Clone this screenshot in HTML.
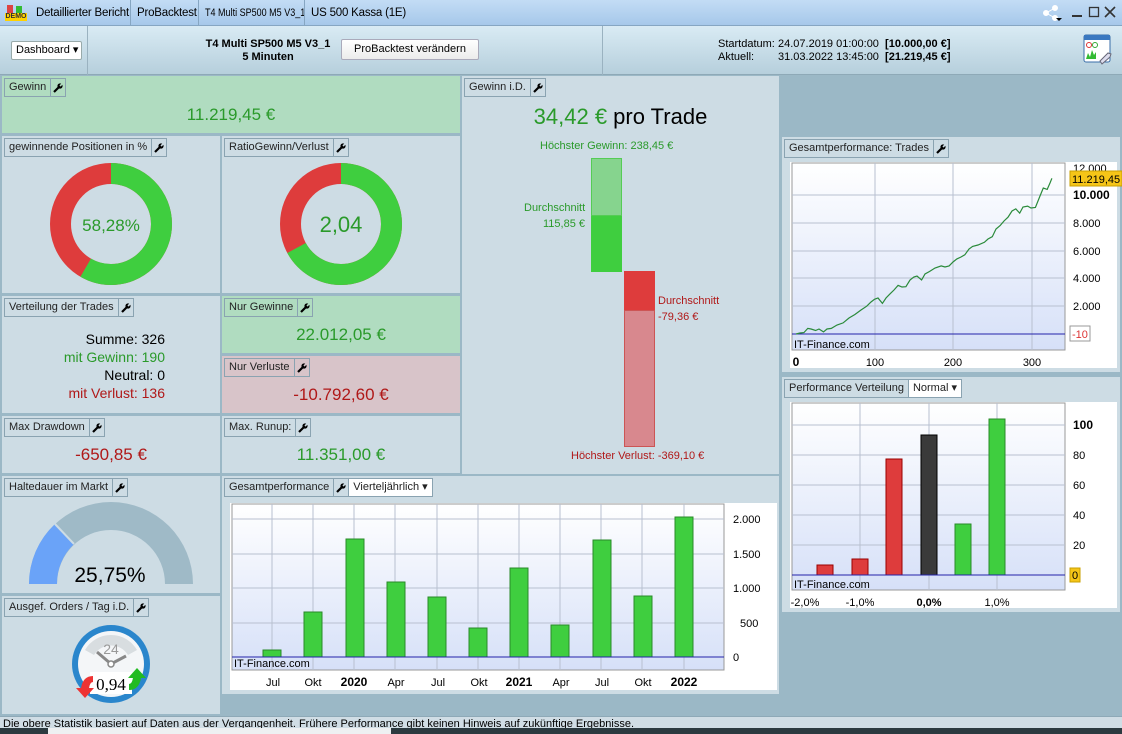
<!DOCTYPE html>
<html><head><meta charset="utf-8"><style>
*{margin:0;padding:0;box-sizing:border-box}
body{width:1122px;height:734px;overflow:hidden;position:relative;background:#9bb8c6;font-family:"Liberation Sans",Arial,sans-serif;font-size:11px;color:#000}
.a{position:absolute}
.p{position:absolute;background:#cddce4}
.t{position:absolute;left:2px;top:2px;height:19px;border:1px solid #8aa3b1;display:flex;font-size:11px;line-height:17px;color:#222}
.t span{padding:0 4px}
.t .w{border-left:1px solid #8aa3b1;width:15px;padding:0;display:flex;align-items:center;justify-content:center}
.v{position:absolute;left:0;right:0;text-align:center;font-size:17px}
.g{color:#2a9a2a}.r{color:#b01818}
.tb{position:absolute;top:7px;font-size:11.5px;letter-spacing:-0.2px;white-space:nowrap}
</style></head><body>
<div class="a" style="left:0;top:0;width:1122px;height:26px;background:linear-gradient(#c3dcf5,#a6c8ea);border-bottom:1px solid #86a6c2"></div>
<div class="a" style="left:5px;top:5px;width:22px;height:16px">
<div class="a" style="left:2px;top:0;width:6px;height:8px;background:#d44"></div><div class="a" style="left:11px;top:1px;width:6px;height:7px;background:#3b3"></div>
<div class="a" style="left:0;top:8px;width:22px;height:8px;background:#ffd200;font-size:7px;font-weight:bold;line-height:8px;color:#333;text-align:center">DEMO</div></div>
<div class="tb" style="left:36px">Detaillierter Bericht</div>
<div class="a" style="left:130px;top:0;width:1px;height:25px;background:#86a6c2"></div>
<div class="tb" style="left:137px">ProBacktest</div>
<div class="a" style="left:198px;top:0;width:1px;height:25px;background:#86a6c2"></div>
<div class="tb" style="left:205px;font-size:11px;letter-spacing:0;transform:scaleX(0.82);transform-origin:0 0">T4 Multi SP500 M5 V3_1</div>
<div class="a" style="left:304px;top:0;width:1px;height:25px;background:#86a6c2"></div>
<div class="tb" style="left:311px">US 500 Kassa (1E)</div>
<svg class="a" style="left:1040px;top:4px" width="82" height="18"><g fill="#fff" stroke="#fff"><circle cx="6" cy="9" r="2.5"/><circle cx="15" cy="4" r="2.5"/><circle cx="15" cy="14" r="2.5"/><line x1="6" y1="9" x2="15" y2="4"/><line x1="6" y1="9" x2="15" y2="14"/></g><path d="M16 14h6l-3 3z" fill="#000"/><rect x="32" y="11" width="10" height="2" fill="#333"/><rect x="49.5" y="3.5" width="9" height="9" fill="none" stroke="#333" stroke-width="1.3"/><path d="M65 3l10 10M75 3l-10 10" stroke="#333" stroke-width="1.6"/></svg>
<div class="a" style="left:0;top:26px;width:1122px;height:49px;background:linear-gradient(#d9ebf4,#b6cfdc);border-bottom:1px solid #8ea9b7"></div>
<div class="a" style="left:87px;top:26px;width:1px;height:49px;background:#9ab2c0"></div>
<div class="a" style="left:602px;top:26px;width:1px;height:49px;background:#9ab2c0"></div>
<div class="a" style="left:11px;top:41px;width:71px;height:19px;background:#fff;border:1px solid #9aa;border-radius:2px;font-size:11px;line-height:17px;padding-left:4px">Dashboard ▾</div>
<div class="a" style="left:198px;top:38px;width:140px;text-align:center;font-weight:bold;font-size:11px;line-height:13px">T4 Multi SP500 M5 V3_1<br>5 Minuten</div>
<div class="a" style="left:341px;top:39px;width:138px;height:21px;background:linear-gradient(#fff,#ececec);border:1px solid #aab;border-radius:2px;text-align:center;line-height:19px;font-size:11px">ProBacktest verändern</div>
<div class="a" style="left:718px;top:38px;font-size:11px;line-height:13px">Startdatum:<br>Aktuell:</div>
<div class="a" style="left:778px;top:38px;font-size:11px;line-height:13px">24.07.2019 01:00:00 &nbsp;<b>[10.000,00 €]</b><br>31.03.2022 13:45:00 &nbsp;<b>[21.219,45 €]</b></div>
<svg class="a" style="left:1083px;top:33px" width="30" height="32"><rect x="1" y="2" width="26" height="27" rx="2" fill="#fff" stroke="#3a6ea8"/><rect x="1" y="2" width="26" height="5" fill="#3a78c0"/><circle cx="6" cy="12" r="2.5" fill="none" stroke="#d33"/><circle cx="12" cy="12" r="2.5" fill="none" stroke="#3a3"/><path d="M3 26l2-6 2 4 2-7 2 5 2-3v7H3z" fill="#3b3"/><path d="M17 28l8-8 3 1-1 3-8 7z" fill="#dde" stroke="#667"/></svg>
<div class="p" style="left:2px;top:76px;width:458px;height:57px;background:#b0dcc0"><div class="t"><span>Gewinn</span><span class="w"><svg width="10" height="10"><path d="M1 9L6 4" stroke="#000" stroke-width="2.2"/><circle cx="7" cy="3" r="2.6" fill="#000"/><path d="M7 3L10 0" stroke="#b0dcc0" stroke-width="1.6"/></svg></span></div><div class="v g" style="top:29px">11.219,45 €</div></div>
<div class="p" style="left:462px;top:76px;width:317px;height:398px"><div class="t"><span>Gewinn i.D.</span><span class="w"><svg width="10" height="10"><path d="M1 9L6 4" stroke="#000" stroke-width="2.2"/><circle cx="7" cy="3" r="2.6" fill="#000"/><path d="M7 3L10 0" stroke="#cddce4" stroke-width="1.6"/></svg></span></div>
<div class="a" style="left:0;right:0;top:28px;text-align:center;font-size:22px"><span class="g">34,42 €</span> pro Trade</div>
<div class="a g" style="left:78px;top:64px;font-size:11px">Höchster Gewinn: 238,45 €</div>
<div class="a" style="left:129px;top:82px;width:31px;height:58px;background:#86d48e;border:1px solid #5c5"></div>
<div class="a" style="left:129px;top:140px;width:31px;height:56px;background:#3fce3f"></div>
<div class="a g" style="left:62px;top:126px;font-size:11px">Durchschnitt</div>
<div class="a g" style="left:81px;top:142px;font-size:11px">115,85 €</div>
<div class="a" style="left:162px;top:195px;width:31px;height:39px;background:#de3c3c"></div>
<div class="a" style="left:162px;top:234px;width:31px;height:137px;background:#d8888e;border:1px solid #c55"></div>
<div class="a r" style="left:196px;top:219px;font-size:11px">Durchschnitt</div>
<div class="a r" style="left:196px;top:235px;font-size:11px">-79,36 €</div>
<div class="a r" style="left:109px;top:374px;font-size:11px">Höchster Verlust: -369,10 €</div></div>
<div class="p" style="left:2px;top:136px;width:218px;height:157px"><div class="t"><span>gewinnende Positionen in %</span><span class="w"><svg width="10" height="10"><path d="M1 9L6 4" stroke="#000" stroke-width="2.2"/><circle cx="7" cy="3" r="2.6" fill="#000"/><path d="M7 3L10 0" stroke="#cddce4" stroke-width="1.6"/></svg></span></div></div>
<div class="p" style="left:222px;top:136px;width:238px;height:157px"><div class="t"><span>RatioGewinn/Verlust</span><span class="w"><svg width="10" height="10"><path d="M1 9L6 4" stroke="#000" stroke-width="2.2"/><circle cx="7" cy="3" r="2.6" fill="#000"/><path d="M7 3L10 0" stroke="#cddce4" stroke-width="1.6"/></svg></span></div></div>
<div class="p" style="left:2px;top:296px;width:218px;height:117px"><div class="t"><span>Verteilung der Trades</span><span class="w"><svg width="10" height="10"><path d="M1 9L6 4" stroke="#000" stroke-width="2.2"/><circle cx="7" cy="3" r="2.6" fill="#000"/><path d="M7 3L10 0" stroke="#cddce4" stroke-width="1.6"/></svg></span></div>
<div class="a" style="right:55px;top:34px;text-align:right;font-size:14px;line-height:18px">Summe: 326<br><span class="g">mit Gewinn: 190</span><br>Neutral: 0<br><span class="r">mit Verlust: 136</span></div></div>
<div class="p" style="left:222px;top:296px;width:238px;height:57px;background:#b0dcc0"><div class="t"><span>Nur Gewinne</span><span class="w"><svg width="10" height="10"><path d="M1 9L6 4" stroke="#000" stroke-width="2.2"/><circle cx="7" cy="3" r="2.6" fill="#000"/><path d="M7 3L10 0" stroke="#b0dcc0" stroke-width="1.6"/></svg></span></div><div class="v g" style="top:29px">22.012,05 €</div></div>
<div class="p" style="left:222px;top:356px;width:238px;height:57px;background:#d8c4c9"><div class="t"><span>Nur Verluste</span><span class="w"><svg width="10" height="10"><path d="M1 9L6 4" stroke="#000" stroke-width="2.2"/><circle cx="7" cy="3" r="2.6" fill="#000"/><path d="M7 3L10 0" stroke="#d8c4c9" stroke-width="1.6"/></svg></span></div><div class="v r" style="top:29px">-10.792,60 €</div></div>
<div class="p" style="left:2px;top:416px;width:218px;height:57px"><div class="t"><span>Max Drawdown</span><span class="w"><svg width="10" height="10"><path d="M1 9L6 4" stroke="#000" stroke-width="2.2"/><circle cx="7" cy="3" r="2.6" fill="#000"/><path d="M7 3L10 0" stroke="#cddce4" stroke-width="1.6"/></svg></span></div><div class="v r" style="top:29px">-650,85 €</div></div>
<div class="p" style="left:222px;top:416px;width:238px;height:57px"><div class="t"><span>Max. Runup:</span><span class="w"><svg width="10" height="10"><path d="M1 9L6 4" stroke="#000" stroke-width="2.2"/><circle cx="7" cy="3" r="2.6" fill="#000"/><path d="M7 3L10 0" stroke="#cddce4" stroke-width="1.6"/></svg></span></div><div class="v g" style="top:29px">11.351,00 €</div></div>
<div class="p" style="left:2px;top:476px;width:218px;height:117px"><div class="t"><span>Haltedauer im Markt</span><span class="w"><svg width="10" height="10"><path d="M1 9L6 4" stroke="#000" stroke-width="2.2"/><circle cx="7" cy="3" r="2.6" fill="#000"/><path d="M7 3L10 0" stroke="#cddce4" stroke-width="1.6"/></svg></span></div></div>
<div class="p" style="left:2px;top:596px;width:218px;height:118px"><div class="t"><span>Ausgef. Orders / Tag i.D.</span><span class="w"><svg width="10" height="10"><path d="M1 9L6 4" stroke="#000" stroke-width="2.2"/><circle cx="7" cy="3" r="2.6" fill="#000"/><path d="M7 3L10 0" stroke="#cddce4" stroke-width="1.6"/></svg></span></div></div>
<div class="p" style="left:222px;top:476px;width:557px;height:218px"><div class="t"><span>Gesamtperformance</span><span class="w"><svg width="10" height="10"><path d="M1 9L6 4" stroke="#000" stroke-width="2.2"/><circle cx="7" cy="3" r="2.6" fill="#000"/><path d="M7 3L10 0" stroke="#cddce4" stroke-width="1.6"/></svg></span><span style="background:#fff;border-left:1px solid #8aa3b1">Vierteljährlich ▾</span></div></div>
<div class="p" style="left:782px;top:137px;width:338px;height:235px"><div class="t"><span>Gesamtperformance: Trades</span><span class="w"><svg width="10" height="10"><path d="M1 9L6 4" stroke="#000" stroke-width="2.2"/><circle cx="7" cy="3" r="2.6" fill="#000"/><path d="M7 3L10 0" stroke="#cddce4" stroke-width="1.6"/></svg></span></div></div>
<div class="p" style="left:782px;top:377px;width:338px;height:235px"><div class="t"><span>Performance Verteilung</span><span style="background:#fff;border-left:1px solid #8aa3b1">Normal ▾</span></div></div>
<div class="a" style="left:0;top:716px;width:1122px;height:18px;background:#d0dde5;border-top:1px solid #8ea9b7;font-size:11px;line-height:14px;padding-left:3px">Die obere Statistik basiert auf Daten aus der Vergangenheit. Frühere Performance gibt keinen Hinweis auf zukünftige Ergebnisse.</div>
<div class="a" style="left:0;top:728px;width:1122px;height:6px;background:#2c3a40"></div>
<div class="a" style="left:48px;top:728px;width:343px;height:6px;background:#eef0f2"></div>
<svg class="a" style="left:0;top:0" width="1122" height="734" font-family="Liberation Sans, Arial, sans-serif">
<defs><linearGradient id="bg" x1="0" y1="0" x2="0" y2="1"><stop offset="0" stop-color="#fff"/><stop offset="1" stop-color="#d6e0f8"/></linearGradient></defs>
<g fill="none" stroke-width="21">
<circle cx="111" cy="224" r="50.5" stroke="#de3c3c"/>
<circle cx="111" cy="224" r="50.5" stroke="#3fce3f" stroke-dasharray="184.9 400" transform="rotate(-90 111 224)"/>
<circle cx="341" cy="224" r="50.5" stroke="#de3c3c"/>
<circle cx="341" cy="224" r="50.5" stroke="#3fce3f" stroke-dasharray="212.6 400" transform="rotate(-90 341 224)"/>
</g>
<text x="111" y="231" text-anchor="middle" font-size="17" fill="#2a9a2a">58,28%</text>
<text x="341" y="232" text-anchor="middle" font-size="22" fill="#2a9a2a">2,04</text>
<path d="M29 584A82 82 0 0 1 193 584L165 584A54 54 0 0 0 57 584Z" fill="#9fbac7"/>
<path d="M29 584A82 82 0 0 1 55 524L74 544A54 54 0 0 0 57 584Z" fill="#6aa3f8"/>
<line x1="55" y1="524" x2="74" y2="544" stroke="#cddce4" stroke-width="2"/>
<text x="110" y="582" text-anchor="middle" font-size="21">25,75%</text>
<circle cx="111" cy="664" r="39" fill="#2a86cc"/><circle cx="111" cy="664" r="33" fill="#f4f6f8"/>
<path d="M85 650A30 30 0 0 1 137 650L128 655A20 20 0 0 0 94 655Z" fill="#d8dde0"/>
<text x="111" y="654" text-anchor="middle" font-size="14" fill="#999">24</text>
<path d="M97 652L111 664L126 656" stroke="#888" stroke-width="3" fill="none"/><circle cx="111" cy="664" r="3" fill="#fff" stroke="#888" stroke-width="1.5"/>
<rect x="90" y="672" width="42" height="22" fill="#fff"/>
<path d="M93 676q-10 0-12 12h-5l9 10 9-10h-5q1-6 4-6z" fill="#e33"/>
<path d="M129 690q10 0 12-12h5l-9-10-9 10h5q-1 6-4 6z" fill="#2b2"/>
<text x="111" y="690" text-anchor="middle" font-size="17" font-family="Liberation Serif, serif">0,94</text>
<rect x="230" y="503" width="547" height="187" fill="#fff"/>
<rect x="232" y="504" width="492" height="166" fill="url(#bg)" stroke="#999"/>
<g stroke="#b8c0d0" stroke-width="1"><line x1="232" y1="519" x2="724" y2="519"/><line x1="232" y1="554" x2="724" y2="554"/><line x1="232" y1="588" x2="724" y2="588"/><line x1="232" y1="623" x2="724" y2="623"/>
<line x1="272" y1="504" x2="272" y2="670"/><line x1="313" y1="504" x2="313" y2="670"/><line x1="354" y1="504" x2="354" y2="670"/><line x1="395" y1="504" x2="395" y2="670"/><line x1="437" y1="504" x2="437" y2="670"/><line x1="478" y1="504" x2="478" y2="670"/><line x1="519" y1="504" x2="519" y2="670"/><line x1="560" y1="504" x2="560" y2="670"/><line x1="601" y1="504" x2="601" y2="670"/><line x1="642" y1="504" x2="642" y2="670"/><line x1="684" y1="504" x2="684" y2="670"/></g>
<g fill="#3fce3f" stroke="#2a8a2a"><rect x="263" y="650" width="18" height="7"/><rect x="304" y="612" width="18" height="45"/><rect x="346" y="539" width="18" height="118"/><rect x="387" y="582" width="18" height="75"/><rect x="428" y="597" width="18" height="60"/><rect x="469" y="628" width="18" height="29"/><rect x="510" y="568" width="18" height="89"/><rect x="551" y="625" width="18" height="32"/><rect x="593" y="540" width="18" height="117"/><rect x="634" y="596" width="18" height="61"/><rect x="675" y="517" width="18" height="140"/></g>
<line x1="232" y1="657" x2="724" y2="657" stroke="#2222aa"/>
<g font-size="11" fill="#000"><text x="234" y="667">IT-Finance.com</text>
<text x="733" y="523">2.000</text><text x="733" y="558">1.500</text><text x="733" y="592">1.000</text><text x="740" y="627">500</text><text x="733" y="661">0</text>
<g text-anchor="middle"><text x="273" y="686">Jul</text><text x="313" y="686">Okt</text><text x="354" y="686" font-weight="bold" font-size="12">2020</text><text x="396" y="686">Apr</text><text x="438" y="686">Jul</text><text x="479" y="686">Okt</text><text x="519" y="686" font-weight="bold" font-size="12">2021</text><text x="561" y="686">Apr</text><text x="602" y="686">Jul</text><text x="643" y="686">Okt</text><text x="684" y="686" font-weight="bold" font-size="12">2022</text></g></g>
<rect x="790" y="162" width="327" height="206" fill="#fff"/>
<rect x="792" y="163" width="273" height="187" fill="url(#bg)" stroke="#999"/>
<g stroke="#b8c0d0"><line x1="792" y1="195" x2="1065" y2="195"/><line x1="792" y1="223" x2="1065" y2="223"/><line x1="792" y1="251" x2="1065" y2="251"/><line x1="792" y1="278" x2="1065" y2="278"/><line x1="792" y1="306" x2="1065" y2="306"/>
<line x1="875" y1="163" x2="875" y2="350"/><line x1="953" y1="163" x2="953" y2="350"/><line x1="1032" y1="163" x2="1032" y2="350"/></g>
<line x1="792" y1="334" x2="1065" y2="334" stroke="#2222aa"/>
<polyline fill="none" stroke="#2a8a3a" stroke-width="1.2" points="796,334 800,333 803.9,332.6 807.8,328.4 811,329 815.6,330.5 819,329 823.5,331.9 827,329 831.3,328.4 837,325 843.1,322.9 849,318 854.9,314.5 861,310 866.7,306.2 871,302 874.5,299.3 878,298 882.4,303.4 886,298 890.2,293.7 894,290 898.1,285.4 902,287 905.9,286.7 910,280 913.8,277 917,276 921.6,280 925,274 929.5,271.5 935,268 941.2,265.9 945,267 949.1,265.9 953,262 956.9,258.9 961,257 964.8,254.8 969,249 972.6,246.4 978,245 984.4,242.3 988,239 992.3,236.7 996,229 1000.1,225.6 1004,221 1008,217.2 1012,211 1015.8,208.9 1019.7,213.1 1023,207 1027.6,206.1 1031,208 1035.4,207.5 1040,196 1043.3,188 1047.2,189.4 1050,183 1051.9,178.3"/>
<g font-size="11"><text x="794" y="348">IT-Finance.com</text>
<text x="1073" y="172">12.000</text><text x="1073" y="199" font-weight="bold" font-size="12">10.000</text><text x="1073" y="227">8.000</text><text x="1073" y="255">6.000</text><text x="1073" y="282">4.000</text><text x="1073" y="310">2.000</text>
<rect x="1070" y="171" width="52" height="15" fill="#f5c518" stroke="#c9a000"/><text x="1072" y="183">11.219,45</text>
<rect x="1070" y="326" width="20" height="15" fill="#fff" stroke="#999"/><text x="1072" y="338" fill="#d33">-10</text>
<text x="796" y="366" text-anchor="middle" font-weight="bold" font-size="12">0</text><text x="875" y="366" text-anchor="middle">100</text><text x="953" y="366" text-anchor="middle">200</text><text x="1032" y="366" text-anchor="middle">300</text></g>
<rect x="790" y="402" width="327" height="206" fill="#fff"/>
<rect x="792" y="403" width="273" height="187" fill="url(#bg)" stroke="#999"/>
<g stroke="#b8c0d0"><line x1="792" y1="425" x2="1065" y2="425"/><line x1="792" y1="455" x2="1065" y2="455"/><line x1="792" y1="485" x2="1065" y2="485"/><line x1="792" y1="515" x2="1065" y2="515"/><line x1="792" y1="545" x2="1065" y2="545"/>
<line x1="860" y1="403" x2="860" y2="590"/><line x1="929" y1="403" x2="929" y2="590"/><line x1="997" y1="403" x2="997" y2="590"/></g>
<g stroke-width="1"><rect x="817" y="565" width="16" height="10" fill="#de3c3c" stroke="#900"/><rect x="852" y="559" width="16" height="16" fill="#de3c3c" stroke="#900"/><rect x="886" y="459" width="16" height="116" fill="#de3c3c" stroke="#900"/><rect x="921" y="435" width="16" height="140" fill="#3a3a3a" stroke="#000"/><rect x="955" y="524" width="16" height="51" fill="#3fce3f" stroke="#2a8a2a"/><rect x="989" y="419" width="16" height="156" fill="#3fce3f" stroke="#2a8a2a"/></g>
<line x1="792" y1="575" x2="1065" y2="575" stroke="#2222aa"/>
<g font-size="11"><text x="794" y="588">IT-Finance.com</text>
<text x="1073" y="429" font-weight="bold" font-size="12">100</text><text x="1073" y="459">80</text><text x="1073" y="489">60</text><text x="1073" y="519">40</text><text x="1073" y="549">20</text>
<rect x="1070" y="568" width="10" height="14" fill="#f5c518" stroke="#c9a000"/><text x="1072" y="579">0</text>
<text x="805" y="606" text-anchor="middle">-2,0%</text><text x="860" y="606" text-anchor="middle">-1,0%</text><text x="929" y="606" text-anchor="middle" font-weight="bold">0,0%</text><text x="997" y="606" text-anchor="middle">1,0%</text></g>
</svg>
</body></html>
